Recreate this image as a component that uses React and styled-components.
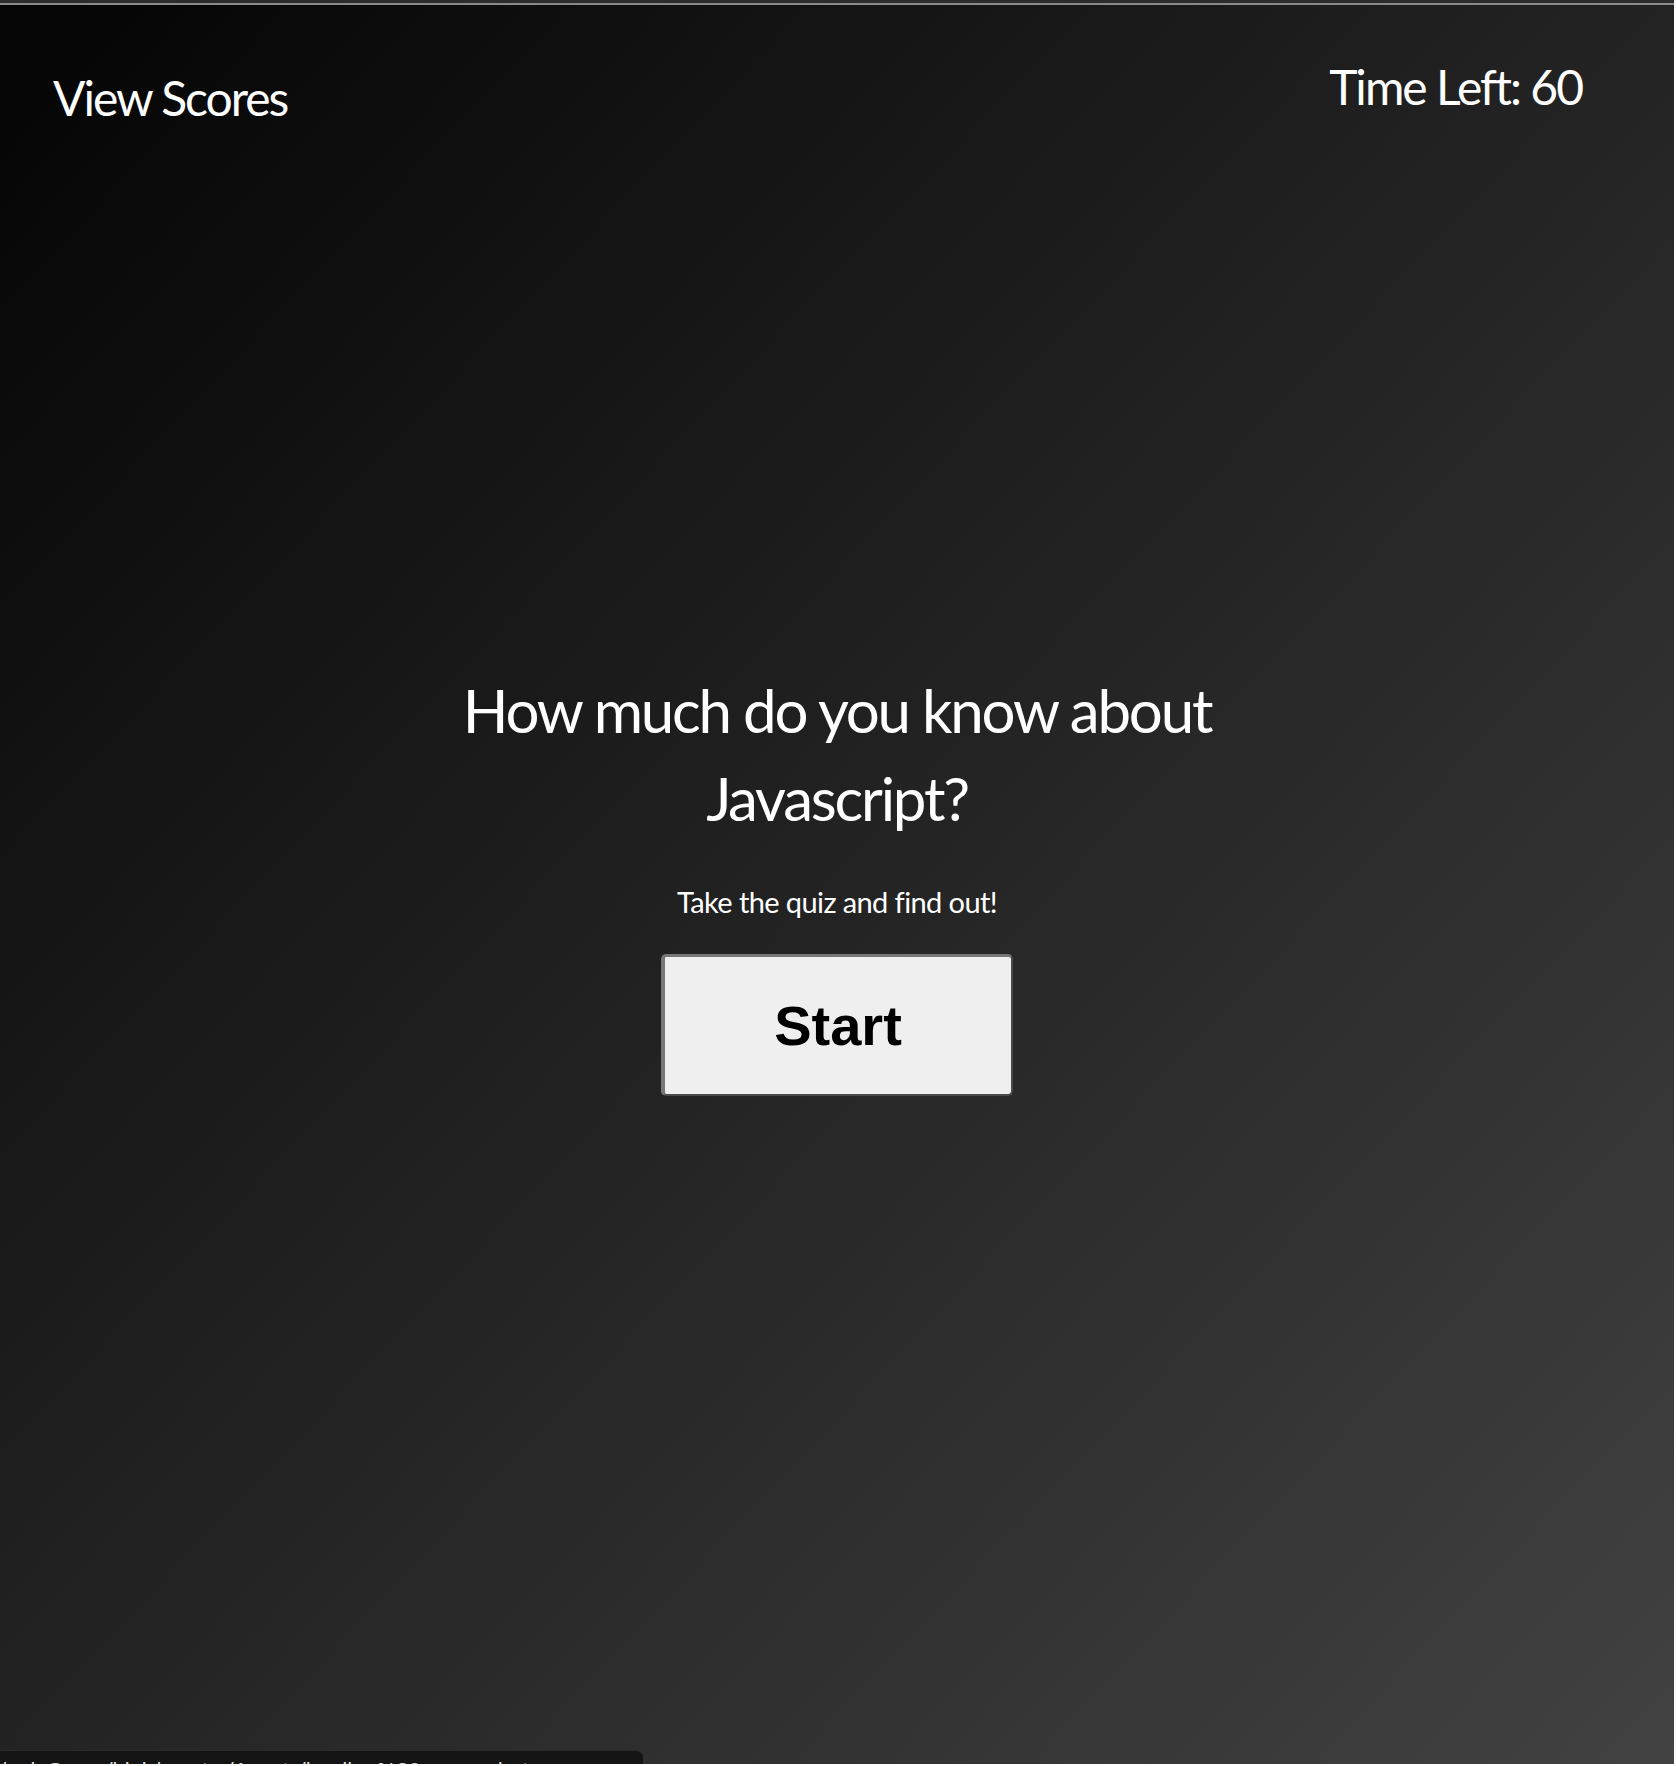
import React from 'react';
import styled, { createGlobalStyle } from 'styled-components';

const GlobalStyle = createGlobalStyle`
  html, body {
    margin: 0;
    padding: 0;
    background: #ffffff;
  }
  * {
    box-sizing: border-box;
  }
`;

const Screen = styled.div`
  position: relative;
  width: 1674px;
  min-height: 1764px;
  display: flex;
  flex-direction: column;
  background: linear-gradient(to bottom right, #040404, #424242);
  font-family: Lato, "Open Sans", sans-serif;
  color: #ffffff;
`;

const BrowserEdge = styled.div`
  height: 5px;
  background: #2c2c2c;
  border-bottom: 2px solid #8a8a8a;
`;

const Header = styled.header`
  display: flex;
  justify-content: space-between;
  align-items: flex-start;
  padding: 0 92px 0 53px;
`;

const ScoresLink = styled.a`
  margin-top: 64px;
  font-size: 48px;
  letter-spacing: -2px;
  color: #ffffff;
  text-decoration: none;
  cursor: pointer;
`;

const Timer = styled.div`
  margin-top: 53px;
  font-size: 48px;
  letter-spacing: -2px;
`;

const Main = styled.main`
  display: flex;
  flex-direction: column;
  align-items: center;
  padding-top: 540px;
`;

const Title = styled.h1`
  margin: 0;
  max-width: 800px;
  font-size: 60px;
  font-weight: 400;
  line-height: 88px;
  letter-spacing: -2.2px;
  text-align: center;
`;

const Subtitle = styled.p`
  margin: 42px 0 0;
  font-size: 29px;
  letter-spacing: -0.6px;
`;

const StartButton = styled.button`
  margin-top: 35px;
  width: 352px;
  height: 142px;
  border-style: solid;
  border-width: 3px 2px 2px 4px;
  border-color: #777777 #4a4a4a #4a4a4a #777777;
  border-radius: 5px;
  background: #efefef;
  color: #000000;
  font-family: "Liberation Sans", Arial, sans-serif;
  font-size: 56px;
  font-weight: 700;
  cursor: pointer;
`;

const StatusBar = styled.div`
  position: absolute;
  left: 0;
  top: 1750px;
  width: 643px;
  height: 16px;
  overflow: hidden;
  padding: 9px 0 0 0;
  background: #141414;
  border-top: 1px solid #2a2a2a;
  border-top-right-radius: 7px;
  font-family: "Liberation Sans", Arial, sans-serif;
  font-size: 22px;
  line-height: 1;
  color: #dddddd;
  white-space: nowrap;
`;

export default function App() {
  return (
    <>
      <GlobalStyle />
      <Screen>
        <BrowserEdge />
        <Header>
          <ScoresLink>View Scores</ScoresLink>
          <Timer>Time Left: 60</Timer>
        </Header>
        <Main>
          <Title>How much do you know about Javascript?</Title>
          <Subtitle>Take the quiz and find out!</Subtitle>
          <StartButton>Start</StartButton>
        </Main>
        <StatusBar>/quizGame/blob/master/Assets/landing%20screenshot.png</StatusBar>
      </Screen>
    </>
  );
}
